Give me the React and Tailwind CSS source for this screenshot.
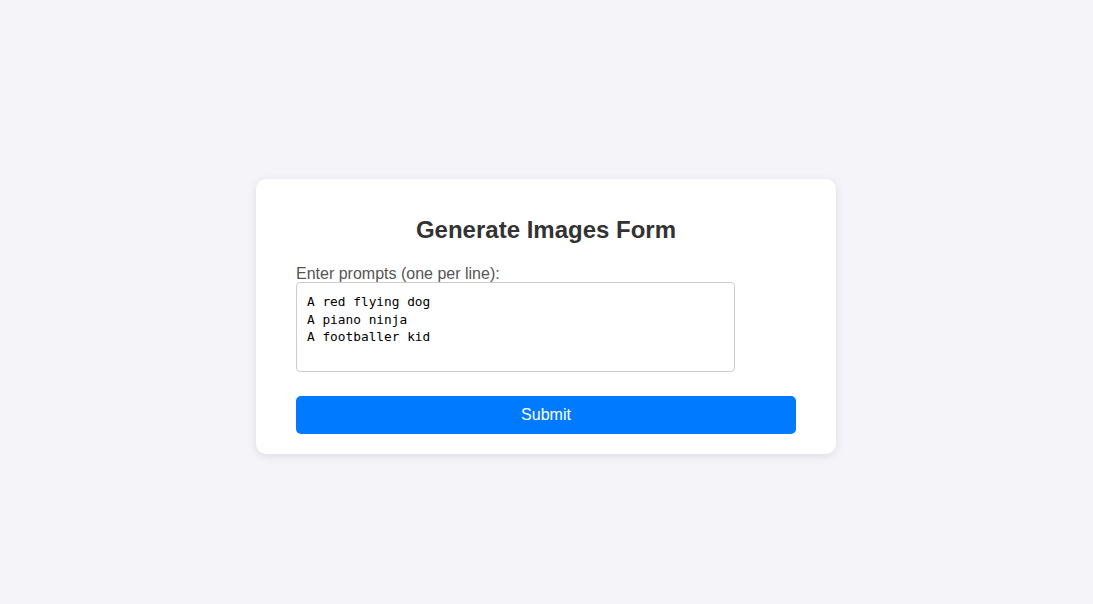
import { useState } from "react";

const App = () => {
  const [prompts, setPrompts] = useState(
    "A red flying dog\nA piano ninja\nA footballer kid"
  );

  const handleSubmit = (e) => {
    e.preventDefault();
  };

  return (
    <div className="min-h-[604px] bg-[#f4f4f9] flex items-center justify-center pt-[29px] pr-[1px] font-['Liberation_Sans',Arial,sans-serif]">
      <form
        onSubmit={handleSubmit}
        className="w-[580px] bg-white rounded-[10px] shadow-[0_2px_10px_rgba(0,0,0,0.1)] px-10 pt-[37px] pb-5"
      >
        <h1 className="text-center text-[24px] leading-[28px] font-bold text-[#333] mb-[21px]">
          Generate Images Form
        </h1>
        <label
          htmlFor="prompts"
          className="block text-[16px] leading-[17px] text-[#555]"
        >
          Enter prompts (one per line):
        </label>
        <textarea
          id="prompts"
          value={prompts}
          onChange={(e) => setPrompts(e.target.value)}
          className="block w-[439px] h-[90px] border border-[#ccc] rounded-[4px] p-[10px] font-['DejaVu_Sans_Mono',monospace] text-[12.8px] leading-[17.5px] text-black resize-none outline-none"
        />
        <button
          type="submit"
          className="mt-6 w-full h-[38px] bg-[#007bff] text-white text-[16px] rounded-[5px]"
        >
          Submit
        </button>
      </form>
    </div>
  );
};

export default App;
